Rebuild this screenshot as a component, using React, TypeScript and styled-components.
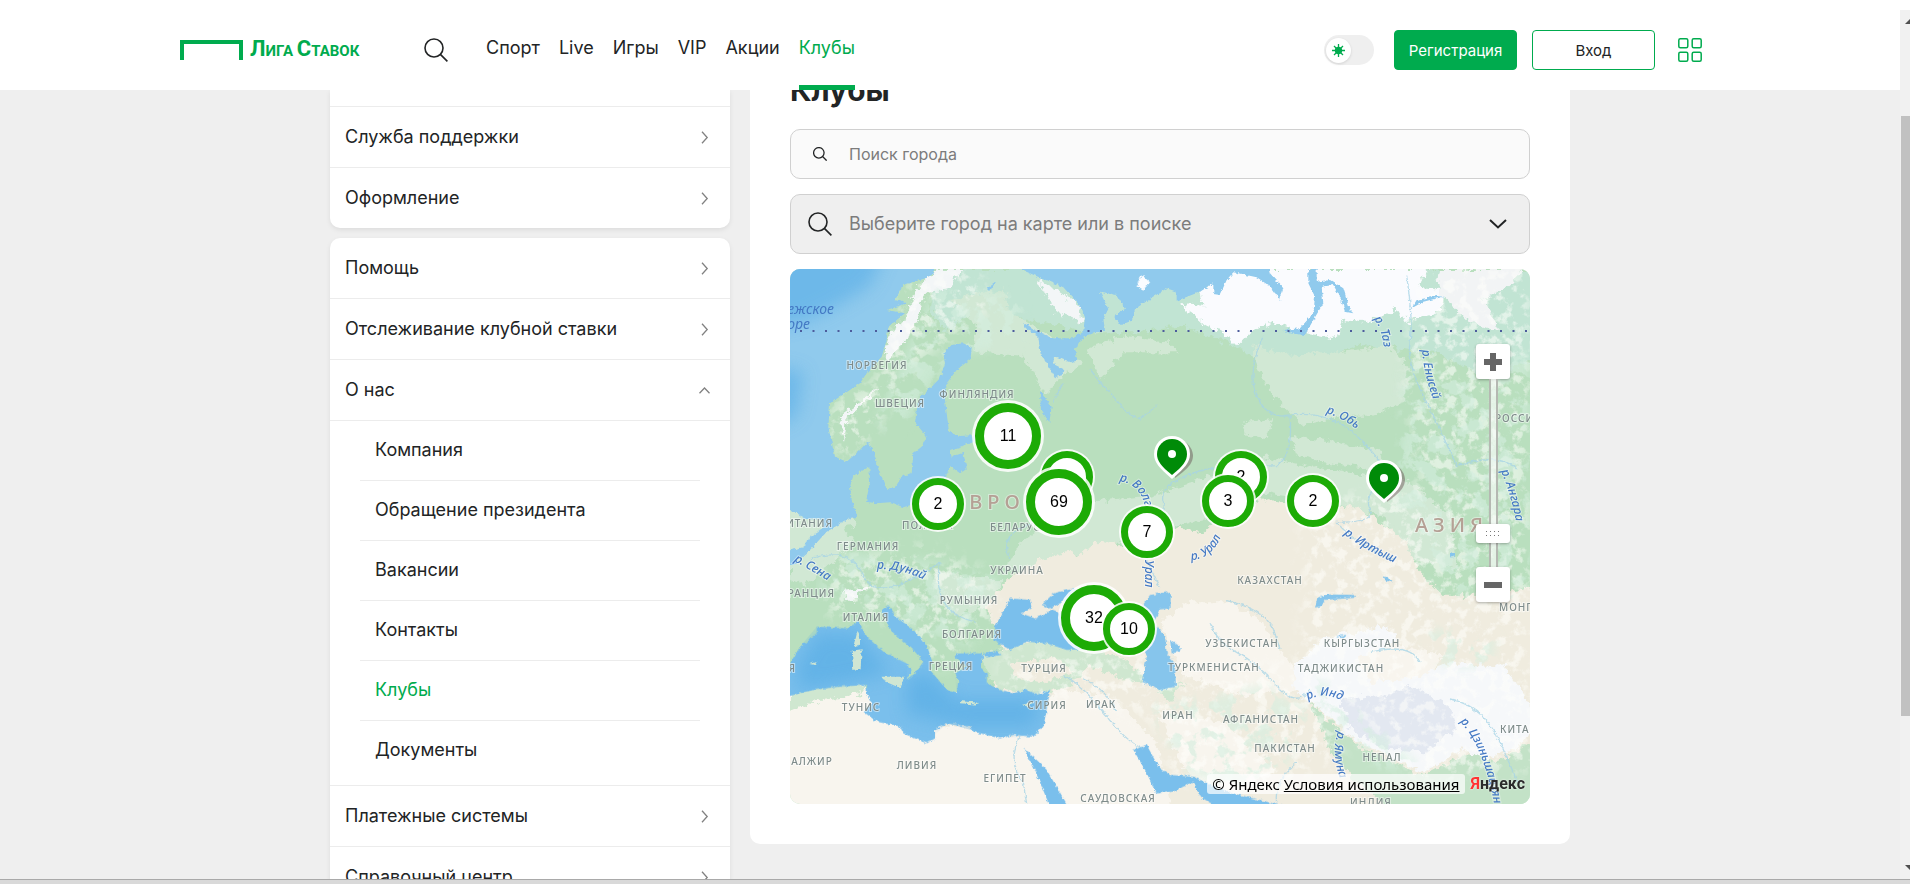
import React from "react";
import styled, { createGlobalStyle, css } from "styled-components";

const green = "#00ab4e";
const ink = "#222425";
const line = "#ececec";

const GlobalStyle = createGlobalStyle`
  *, *::before, *::after { box-sizing: border-box; }
  html, body { margin: 0; background: #fff; }
  body { font-family: Inter, "Open Sans", sans-serif; color: ${ink}; overflow: hidden; }
  button, input, select { font-family: inherit; color: inherit; margin: 0; }
  ul { list-style: none; margin: 0; padding: 0; }
  a { color: inherit; text-decoration: none; }
  svg { display: block; flex: none; }
`;

const Shell = styled.div`
  display: flex;
  flex-direction: column;
  height: 100vh;
`;

const Viewport = styled.div`
  display: flex;
  flex: 1;
  min-height: 0;
`;

const Page = styled.div`
  display: flex;
  flex-direction: column;
  flex: 1;
  min-width: 0;
  overflow: hidden;
  background: #efefef;
`;

const ScrollTrack = styled.div`
  display: flex;
  flex-direction: column;
  align-items: flex-end;
  width: 10px;
  margin-top: 10px;
  background: #f1f1f1;
  overflow: hidden;
`;

const ScrollThumb = styled.div`
  width: 9px;
  height: 69%;
  margin: 92px 0 auto;
  background: #c1c1c1;
`;

const ScrollArrow = styled.div<{ $down?: boolean }>`
  flex: none;
  width: 5px;
  height: 5px;
  margin: ${(p) => (p.$down ? "0 0 9px" : "9px 0 0")};
  background: #505050;
  clip-path: ${(p) => (p.$down ? "polygon(0 0, 100% 0, 100% 100%)" : "polygon(0 100%, 100% 0, 100% 100%)")};
`;

const BottomBar = styled.div`
  height: 5px;
  border-top: 1px solid #a9a9a9;
  background: #d9d9d9;
`;

const Header = styled.header`
  position: relative;
  z-index: 1;
  flex: none;
  height: 90px;
  background: #fff;
`;

const HeaderInner = styled.div`
  display: flex;
  align-items: stretch;
  max-width: 1540px;
  height: 100%;
  margin: 0 auto;
  padding-top: 10px;
`;

const Logo = styled.a`
  display: flex;
  align-items: center;
  gap: 7px;
  width: 181px;
  margin-right: 63px;
  color: ${green};
  font: 700 15px/24px Roboto, sans-serif;
  white-space: nowrap;
  text-transform: uppercase;
`;

const LogoInitial = styled.span`
  font-size: 22px;
`;

const IconButton = styled.button`
  display: flex;
  align-items: center;
  padding: 0;
  border: 0;
  background: none;
  cursor: pointer;
`;

const Nav = styled.nav`
  display: flex;
  gap: 19px;
  margin-left: 38px;
`;

const NavLink = styled.a<{ $active?: boolean }>`
  display: flex;
  padding-top: 26px;
  border-bottom: 5px solid ${(p) => (p.$active ? green : "transparent")};
  color: ${(p) => (p.$active ? green : ink)};
  font-size: 18px;
  line-height: 24px;
`;

const Actions = styled.div`
  display: flex;
  align-items: center;
  gap: 15px;
  margin: 0 10px 0 auto;
`;

const ThemeSwitch = styled.label`
  display: flex;
  align-items: center;
  width: 50px;
  height: 30px;
  margin-right: 5px;
  padding: 2px;
  border-radius: 15px;
  background: #efefef;
`;

const SwitchInput = styled.input`
  position: absolute;
  opacity: 0;
`;

const SwitchKnob = styled.span`
  display: flex;
  align-items: center;
  justify-content: center;
  width: 25px;
  height: 25px;
  border-radius: 50%;
  background: #fff;
  box-shadow: 0 1px 3px rgba(0, 0, 0, 0.12);
`;

const ActionButton = styled.button<{ $filled?: boolean }>`
  width: 123px;
  height: 40px;
  padding: 0;
  border: 1px solid ${green};
  border-radius: 4px;
  background: ${(p) => (p.$filled ? green : "#fff")};
  color: ${(p) => (p.$filled ? "#fff" : ink)};
  font-size: 15px;
  cursor: pointer;
`;

const Columns = styled.div`
  display: flex;
  align-items: flex-start;
  gap: 20px;
  width: 100%;
  max-width: 1240px;
  margin: 0 auto;
`;

const Sidebar = styled.aside`
  display: flex;
  flex-direction: column;
  gap: 10px;
  flex: 0 0 400px;
`;

const MenuCard = styled.ul<{ $continued?: boolean }>`
  border-radius: 10px;
  background: #fff;
  box-shadow: 0 2px 5px rgba(0, 0, 0, 0.08);
  ${(p) =>
    p.$continued &&
    css`
      padding-top: 16px;
      border-radius: 0 0 10px 10px;
    `}
`;

const MenuItem = styled.li<{ $top?: boolean; $last?: boolean }>`
  border-top: ${(p) => (p.$top ? `1px solid ${line}` : "0")};
  border-bottom: ${(p) => (p.$last ? "0" : `1px solid ${line}`)};
`;

const menuRow = css`
  display: flex;
  align-items: center;
  justify-content: space-between;
  width: 100%;
  height: 60px;
  padding: 0 19px 0 15px;
  border: 0;
  background: none;
  font-size: 18px;
  line-height: 24px;
  text-align: left;
`;
const MenuLink = styled.a`${menuRow}`;
const MenuToggle = styled.button`${menuRow}`;

const SubMenu = styled.ul`
  padding: 0 30px 4px;
  border-top: 1px solid ${line};
`;

const SubItem = styled.li`
  height: 60px;
  border-bottom: 1px solid ${line};
  &:last-child { border-bottom: 0; }
`;

const SubLink = styled.a<{ $active?: boolean }>`
  display: flex;
  align-items: center;
  height: 58px;
  padding-left: 15px;
  color: ${(p) => (p.$active ? green : ink)};
  font-size: 18px;
  line-height: 24px;
`;

const Content = styled.main`
  flex: 1;
  min-width: 0;
  margin-top: -60px;
  padding: 40px;
  border-radius: 10px;
  background: #fff;
`;

const Title = styled.h1`
  margin: 0 0 19px;
  font-size: 30px;
  font-weight: 700;
  line-height: 40px;
`;

const Field = styled.label<{ $tall?: boolean }>`
  display: flex;
  align-items: center;
  height: ${(p) => (p.$tall ? "60px" : "50px")};
  margin-bottom: 15px;
  border: 1px solid #d0d0d0;
  border-radius: 10px;
  background: ${(p) => (p.$tall ? "#efefef" : "#fafafa")};
`;

const FieldIcon = styled.span`
  display: flex;
  justify-content: center;
  width: 58px;
`;

const CityInput = styled.input`
  flex: 1;
  min-width: 0;
  padding: 0;
  border: 0;
  outline: 0;
  background: none;
  font-size: 16px;
  line-height: 24px;
  &::placeholder { color: #7c7c7c; opacity: 1; }
`;

const CitySelect = styled.select`
  flex: 1;
  min-width: 0;
  padding: 0;
  border: 0;
  outline: 0;
  appearance: none;
  background: none;
  color: #7c7c7c;
  font-size: 18px;
  line-height: 24px;
`;

const SelectChevron = styled.span`
  margin-right: 22px;
`;

const MapBox = styled.section`
  position: relative;
  height: 535px;
  border-radius: 10px;
  overflow: hidden;
`;

const Cluster = styled.button<{ $x: number; $y: number; $big?: boolean }>`
  position: absolute;
  left: ${(p) => p.$x}px;
  top: ${(p) => p.$y}px;
  width: ${(p) => (p.$big ? 66 : 52)}px;
  height: ${(p) => (p.$big ? 66 : 52)}px;
  padding: 0;
  transform: translate(-50%, -50%);
  border: ${(p) => (p.$big ? 9 : 7)}px solid #1dab06;
  border-radius: 50%;
  background: #fff;
  box-shadow: 0 0 0 ${(p) => (p.$big ? 3 : 2)}px rgba(255, 255, 255, 0.85);
  color: #000;
  font: 16px/20px "Liberation Sans", Arial, sans-serif;
`;

const Pin = styled.button<{ $x: number; $y: number }>`
  position: absolute;
  left: ${(p) => p.$x}px;
  top: ${(p) => p.$y}px;
  padding: 0;
  border: 0;
  background: none;
  transform: translate(-19px, -18px);
`;

const ZoomControl = styled.div`
  position: absolute;
  top: 75px;
  right: 20px;
  display: flex;
  flex-direction: column;
  align-items: center;
  width: 34px;
`;

const ZoomButton = styled.button`
  display: flex;
  align-items: center;
  justify-content: center;
  width: 34px;
  height: 35px;
  padding: 0;
  border: 0;
  border-radius: 3px;
  background: #fff;
  box-shadow: 0 1px 3px rgba(0, 0, 0, 0.3);
`;

const ZoomTrack = styled.div`
  display: flex;
  justify-content: center;
  align-items: flex-end;
  width: 9px;
  height: 188px;
  padding-bottom: 24px;
  border: solid #b5b8b2;
  border-width: 0 2px;
  background: rgba(255, 255, 255, 0.6);
`;

const ZoomHandle = styled.div`
  display: flex;
  flex: none;
  align-items: center;
  justify-content: center;
  width: 34px;
  height: 19px;
  border-radius: 3px;
  background: #fff;
  box-shadow: 0 1px 3px rgba(0, 0, 0, 0.3);
`;

const Attribution = styled.div`
  position: absolute;
  right: 5px;
  bottom: 10px;
  display: flex;
  align-items: center;
  gap: 6px;
  color: #000;
  font: 15px/20px "Noto Sans", "Open Sans", sans-serif;
  white-space: nowrap;
`;

const Terms = styled.span`
  padding: 0 5px;
  border-radius: 3px;
  background: rgba(255, 255, 255, 0.7);
  a { text-decoration: underline; }
`;

const YandexLogo = styled.a`
  color: #2b2b2b;
  font: 700 16px/20px Roboto, sans-serif;
  text-shadow: 0 0 2px #fff;
  span { color: #f33; }
`;

const Chevron = ({ up }: { up?: boolean }) => (
  <svg width="13" height="13" viewBox="0 0 13 13" fill="none" stroke="#818181" strokeWidth="1.3" aria-hidden>
    <path d={up ? "M1.5 9.2 6.5 4l5 5.2" : "M4 .8 9.2 6.5 4 12.2"} />
  </svg>
);

const SearchIcon = ({ size, weight = 1.6 }: { size: number; weight?: number }) => (
  <svg width={size} height={size} viewBox="0 0 24 24" fill="none" stroke={ink} strokeWidth={weight} aria-hidden>
    <circle cx="10" cy="10" r="9" />
    <path d="m16.4 16.4 7 7" />
  </svg>
);

type Label = [string, number, number, ("start" | "end")?];
const countries: Label[] = [
  ["НОРВЕГИЯ", 87, 100], ["ШВЕЦИЯ", 110, 138], ["ФИНЛЯНДИЯ", 187, 129],
  ["БРИТАНИЯ", 43, 258, "end"], ["ПОЛЬША", 112, 260, "start"], ["БЕЛАРУСЬ", 200, 262, "start"],
  ["РОССИЯ", 705, 153, "start"], ["ГЕРМАНИЯ", 78, 281], ["УКРАИНА", 227, 305],
  ["ФРАНЦИЯ", 45, 328, "end"], ["ИТАЛИЯ", 76, 352], ["РУМЫНИЯ", 179, 335],
  ["БОЛГАРИЯ", 182, 369], ["ГРЕЦИЯ", 161, 401], ["ТУРЦИЯ", 254, 403], ["ИСПАНИЯ", 6, 403, "end"],
  ["ТУНИС", 71, 442], ["СИРИЯ", 257, 440], ["ИРАК", 311, 439], ["АЛЖИР", 22, 496],
  ["ЛИВИЯ", 127, 500], ["ЕГИПЕТ", 215, 513], ["САУДОВСКАЯ", 328, 533],
  ["КАЗАХСТАН", 480, 315], ["УЗБЕКИСТАН", 452, 378], ["ТУРКМЕНИСТАН", 424, 402],
  ["КЫРГЫЗСТАН", 572, 378], ["ТАДЖИКИСТАН", 551, 403], ["ИРАН", 388, 450],
  ["АФГАНИСТАН", 471, 454], ["ПАКИСТАН", 495, 483], ["НЕПАЛ", 592, 492],
  ["КИТАЙ", 710, 464, "start"], ["МОНГОЛИЯ", 709, 342, "start"], ["ИНДИЯ", 581, 537],
];

const rivers: [string, string][] = [
  ["р. Сена", "M4 292 Q22 302 42 314"],
  ["р. Дунай", "M87 300 Q112 299 138 313"],
  ["р. Волга", "M329 212 Q355 216 356 248"],
  ["р. Урал", "M355 278 V335"],
  ["р. Урал", "M401 291 Q424 290 433 262"],
  ["р. Таз", "M584 50 Q593 62 594 82"],
  ["р. Енисей", "M632 81 Q634 108 646 138"],
  ["р. Обь", "M536 144 Q556 150 572 165"],
  ["р. Ангара", "M711 202 Q722 228 727 258"],
  ["р. Иртыш", "M554 265 Q575 282 612 297"],
  ["р. Инд", "M518 431 Q535 421 556 434"],
  ["р. Ямуна", "M548 462 Q540 485 552 515"],
  ["р. Цзиньшацзян", "M670 453 Q694 476 706 545"],
];

const Terrain = () => (
  <svg width="100%" height="100%" viewBox="0 0 740 535" preserveAspectRatio="xMidYMid slice" role="img" aria-label="Карта клубов">
    <defs>
      <filter id="coast" x="-5%" y="-5%" width="110%" height="110%">
        <feTurbulence type="fractalNoise" baseFrequency=".09" numOctaves="3" seed="4" />
        <feDisplacementMap in="SourceGraphic" scale="12" xChannelSelector="R" yChannelSelector="G" />
      </filter>
      <filter id="ragged" x="-10%" y="-10%" width="120%" height="120%">
        <feTurbulence type="fractalNoise" baseFrequency=".05" numOctaves="4" seed="9" />
        <feDisplacementMap in="SourceGraphic" scale="34" xChannelSelector="R" yChannelSelector="G" />
      </filter>
      <filter id="relief" x="0" y="0" width="100%" height="100%">
        <feGaussianBlur in="SourceGraphic" stdDeviation="24" result="area" />
        <feTurbulence type="fractalNoise" baseFrequency=".03" numOctaves="5" seed="12" />
        <feColorMatrix type="matrix" values="0 0 0 0 1  0 0 0 0 1  0 0 0 0 .97  6 0 0 0 -3" />
        <feComposite in2="area" operator="in" />
      </filter>
      <filter id="woods" x="0" y="0" width="100%" height="100%">
        <feGaussianBlur in="SourceGraphic" stdDeviation="16" result="area" />
        <feTurbulence type="fractalNoise" baseFrequency=".018" numOctaves="5" seed="21" />
        <feColorMatrix type="matrix" values="0 0 0 0 .66  0 0 0 0 .86  0 0 0 0 .74  0 12 0 0 -6.2" />
        <feComposite in2="area" operator="in" />
      </filter>
      <filter id="soft" x="-50%" y="-50%" width="200%" height="200%"><feGaussianBlur stdDeviation="26" /></filter>
      <clipPath id="medClip">
        <path d="M30 500 30 400 60 350 110 290 200 295 235 275 260 320 310 365 380 410 380 450 405 430 430 395 400 360 330 300 305 240 325 225 345 258 440 345 450 420 500 480 530 490 525 430 545 405 525 370 600 370 600 410 620 460 700 490 810 480 790 590 760 620 660 625 500 580 440 640 360 590 250 545 260 465 100 480Z" />
      </clipPath>
    </defs>
    <rect width="740" height="535" fill="#b9dfbe" />
    <g transform="scale(.333333)">
      {/* vegetation belts and steppe */}
      <g filter="url(#ragged)">
        <path fill="#c1e4d3" d="M440 0H2260V260L2100 330 1940 250 1840 240 1700 230 1560 280 1450 290 1330 230 1180 170 1050 190 900 190 700 150 560 110 470 190 420 120Z" />
        <path fill="#d1e8d4" d="M480 90 640 60 660 130 780 200 880 280 800 330 770 380 700 260 550 250 560 170ZM890 240 1000 200 1130 220 1170 250 1000 250 930 330ZM1390 230 1500 260 1640 250 1800 230 1860 300 1840 400 1740 440 1650 440 1540 470 1450 380 1400 300ZM1360 460 1450 450 1430 510 1370 500ZM1500 500 1760 540 1800 610 1600 580 1520 560ZM880 700 1080 680 1180 650 1400 560 1600 600 1860 640 1980 740 2000 900 1840 860 1780 740 1560 690 1400 670 1280 740 1040 800 850 870 640 910 690 820 780 760ZM0 780 150 760 190 820 120 890 40 950 0 920ZM430 900 560 930 640 930 600 1010 500 1040 440 1000ZM120 590 180 700 200 770 110 780Z" />
        <path fill="#f0ecdf" d="M590 1010 680 905 760 870 850 845 860 870 930 810 1000 835 1060 790 1140 775 1240 790 1280 750 1340 725 1430 690 1520 712 1700 715 1790 770 1850 820 1880 900 1960 980 2100 980 2260 950V1660H-40V1240L600 1270 640 1150Z" />
        <path fill="#f8f5ee" d="M-20 1280 220 1240 400 1360 700 1400 800 1260 960 1280 1100 1420 1150 1640H-20ZM1110 1060 1190 1000 1320 1000 1420 1060 1460 1130 1560 1260 1360 1280 1180 1220ZM1620 1180 1780 1120 1960 1160 1900 1240 1760 1290 1640 1250ZM1100 1320 1300 1360 1460 1500 1300 1600 1180 1500Z" />
        <path fill="#cfe7d0" d="M570 1160 740 1110 860 1130 980 1160 1080 1230 1030 1240 900 1190 840 1250 740 1280 620 1260ZM0 1260 120 1250 230 1245 220 1275 90 1290 0 1330ZM1100 1260 1180 1240 1140 1300Z" />
        <path fill="#f0ecdf" d="M660 1180 800 1170 850 1210 760 1240 680 1230Z" />
        <path fill="#f6f8fa" d="M1510 1190 1600 1110 1780 1070 1830 1110 1700 1170 1740 1240 1860 1230 1980 1180 2140 1190 2200 1270 2240 1360 2180 1440 2080 1470 2020 1440 1900 1510 1700 1420 1590 1320 1510 1260Z" />
        <path fill="#e3e8f1" d="M1650 1290 1780 1280 1860 1250 1980 1310 2000 1380 1900 1450 1800 1440 1680 1380Z" />
        <path fill="#c3e2c7" d="M1560 1300 1700 1430 1900 1520 2040 1450 2120 1480 2260 1400V1640H1820L1700 1540 1620 1440Z" />
        <path fill="#fafbfe" d="M1170 105 1240 110 1230 60 1290 20 1320 0H1920L1880 50 1970 60 1950 130 1850 160 1820 120 1740 160 1660 150 1640 210 1540 190 1440 160 1380 190 1340 230 1300 190 1250 170Z" />
        <path fill="#f2f4f5" d="M1950 0H2200L2160 50 2080 90 2130 190 2040 160 1990 110 1940 70Z" />
        <path fill="#f3f6f7" d="M440 0 520 0 470 60 400 80 380 160 330 240 285 280 300 190 350 150 370 70ZM270 355 225 400 175 440 165 520 150 440ZM740 30 800 60 870 110 880 160 800 130ZM155 970 215 960 240 955 190 995Z" />
      </g>
      <path fill="#000" opacity=".55" filter="url(#relief)" d="M360 40 560 0 600 120 430 240 340 330 260 470 180 570 120 520 130 400 260 340ZM100 880 400 830 600 920 620 1030 450 1200 340 1060 120 1040ZM1900 0H2220V740L2060 800 1900 700 1840 300ZM1540 700 2220 620V1200L1540 1160ZM1080 1240 1540 1180 1660 1460 1400 1570 1150 1530ZM640 1150 1100 1160 1200 1400 950 1300 640 1260ZM1500 1140H2220V1500L1900 1530Z" />
      <path fill="#000" opacity=".6" filter="url(#woods)" d="M1840 300 2220 240V760L2120 960 1900 880 1820 700ZM160 850 420 880 630 930 540 1130 380 1080 300 1010 80 960ZM1080 1310 1240 1290 1420 1250 1560 1330 1480 1500 1330 1560 1180 1500ZM1540 1240H1600L1900 1500 1760 1500ZM1880 820 2220 860V990L1960 980ZM1900 1080 2120 1100 2100 1190 1960 1190ZM440 50 700 90 700 220 480 260 320 500 260 460Z" />
      {/* open water */}
      <g filter="url(#coast)" fill="#90caed">
        <g transform="translate(-30 -27)">
          <path d="M0 0H480L455 45 430 57 370 75 345 120 380 130 320 150 375 160 325 200 320 240 305 290 260 340 240 370 150 430 145 500 165 590 200 605 240 570 262 545 280 570 295 627 320 690 345 683 365 650 395 640 400 580 425 560 440 530 405 487 415 420 450 385 480 355 495 310 490 280 515 255 550 250 575 262 572 297 530 330 500 370 495 420 500 460 507 515 540 528 590 525 635 530 580 547 540 560 510 570 515 590 550 578 560 627 540 640 510 618 490 667 460 717 420 727 370 742 330 727 290 730 258 725 270 667 268 620 220 647 210 680 215 720 232 770 210 774 140 815 90 870 40 915H0Z" />
          <path d="M720 27 790 57 850 82 900 137 915 172 910 212 880 235 820 235 760 207 730 185 735 202 775 232 782 282 810 327 825 352 848 345 850 327 820 312 822 289 870 307 892 302 885 267 900 242 925 225 975 210 970 177 985 147 960 95 1010 105 1035 147 1000 167 1022 195 1055 182 1065 147 1110 117 1160 85 1190 95 1190 122 1260 95 1300 70 1300 102 1320 105 1340 60 1360 37 1430 52 1470 77 1500 120 1510 85 1470 40 1460 0H720Z" />
          <path d="M780 390 815 440 808 486 783 450ZM620 83 650 62 630 92ZM1895 145 1910 120 1970 108 1990 110 1930 125Z" />
          <path d="M1585 27H1610V65L1650 60 1690 85 1710 150 1720 160 1695 155 1680 110 1660 75 1625 80 1630 130 1600 180 1575 225 1530 220 1510 210 1560 205 1600 160 1605 110 1585 70Z" />
        </g>
      </g>
      <g opacity=".85" filter="url(#soft)" fill="#68b5e8">
        <path d="M-60 -60H290L240 50 140 110 60 150 -60 180ZM-60 290 40 310 20 440 -60 480Z" />
      </g>
      <g filter="url(#coast)">
        <path fill="#d1e8d4" d="M-10 725 25 730 40 750 95 752 100 775 60 805 40 835-10 845Z" />
        <path fill="#fbfcff" d="M1040 50 1055 18 1080 40 1060 62Z" />
        <g transform="translate(-30 783)">
          <path fill="#7abfec" d="M0 505 30 400 60 350 110 310 110 290 200 295 235 275 260 320 310 365 380 400 395 420 380 450 405 430 430 395 400 360 330 300 305 240 325 225 345 258 400 300 440 345 455 390 450 420 500 480 530 490 535 450 525 430 560 410 530 390 525 370 600 370 610 380 600 410 620 430 620 460 660 480 700 490 740 480 770 495 810 480 800 540 790 590 760 620 700 615 660 625 580 605 570 590 500 580 465 600 465 625 440 640 370 610 360 590 290 575 250 545 275 520 260 490 260 465 170 470 100 480Z" />
          <path fill="#7abfec" d="M645 290 690 205 750 210 755 235 725 250 765 265 820 240 845 250 900 300 960 330 975 355 860 360 800 340 740 335 690 360 640 330ZM785 225 820 190 880 175 900 200 850 215 810 235ZM610 372 650 362 665 375 620 382ZM730 655 770 690 800 720 865 830H810L760 710Z" />
          <path fill="#7abfec" d="M1060 660 1100 645 1135 710 1170 735 1240 740 1290 765 1360 790 1520 830H1310L1260 800 1240 755 1180 785 1130 790 1095 720Z" />
          <path fill="#86c5ec" d="M1085 230 1110 195 1172 185 1172 235 1140 238 1120 280 1155 315 1160 370 1185 400 1188 470 1140 480 1085 455 1100 380 1080 310Z" />
          <path fill="#86c5ec" d="M1170 330 1202 350 1200 365 1175 370ZM1605 235 1612 203 1640 193 1725 195 1722 204 1635 210 1622 233ZM1810 138 1840 152 1820 157ZM1668 318 1702 315 1690 325ZM2010 68 2025 65 2025 80 2010 82Z" />
        </g>
      </g>
      <g transform="translate(-30 783)" clipPath="url(#medClip)">
        <path opacity=".7" filter="url(#soft)" fill="#5aaee5" d="M50 410 110 310 230 310 330 430 180 460 60 480ZM380 440 450 430 530 510 780 510 760 590 560 590 380 550Z" />
      </g>
      <g transform="translate(-30 783)" filter="url(#coast)">
        <path fill="#cfe6d3" d="M232 305 240 330 235 350 222 345ZM215 362 245 358 242 415 220 420ZM305 440 372 440 362 475 305 450ZM540 513 595 518 595 524 540 520ZM725 525 760 515 745 532ZM88 402 110 395 105 405Z" />
      </g>
      {/* rivers */}
      <g fill="none" stroke="#a7d4e6" strokeWidth="4" opacity=".75" filter="url(#coast)">
        <path d="M1420 200Q1370 310 1400 380T1500 440Q1510 560 1460 590L1250 600Q1100 640 1120 700T1010 780Q1030 830 1060 850L1110 960" />
        <path d="M1480 440Q1620 420 1700 500T1790 610Q1720 680 1740 720T1640 760Q1700 830 1810 870" />
        <path d="M1850 20Q1870 160 1860 220T1900 380 2000 590Q2130 550 2180 600" />
        <path d="M900 300 930 340 960 370 1010 430 1050 450 1100 410M820 340 790 400M1260 1060Q1280 1120 1340 1150T1460 1250 1560 1260" />
        <path d="M1310 995Q1420 1020 1450 1080L1470 1140M820 1220Q870 1240 940 1330T1060 1440M880 1230Q950 1260 980 1330M60 870Q180 830 220 920T450 880Q420 1030 560 1060M930 1620" />
        <path d="M1520 1480Q1450 1540 1460 1600M690 1400Q650 1480 700 1540L710 1605M1740 1150Q1860 1120 1890 1180M1980 1290Q2080 1310 2130 1420T2180 1540M660 870Q620 790 740 760T860 680" />
      </g>
    </g>
    <path d="M10 62H740" stroke="#4d5c9c" strokeWidth="2" strokeDasharray="2 10.5" />
    <g fill="#7f8c8b" stroke="#fff" strokeOpacity=".5" strokeWidth="2" paintOrder="stroke" fontFamily='"Noto Sans", "Open Sans", sans-serif' fontWeight="500" fontSize="10" letterSpacing="1">
      {countries.map(([name, x, y, anchor = "middle"]) => (
        <text key={name} x={x} y={y} textAnchor={anchor}>{name}</text>
      ))}
    </g>
    <g fill="#b5a095" stroke="#fff" strokeOpacity=".4" strokeWidth="2" paintOrder="stroke" fontFamily='"Noto Sans", "Open Sans", sans-serif' fontWeight="500" fontSize="20" letterSpacing="5">
      <text x="163" y="240">ЕВРОПА</text>
      <text x="625" y="263">АЗИЯ</text>
    </g>
    <g fill="#4479c4" fontFamily='"Noto Sans", "Open Sans", sans-serif' fontStyle="italic" fontSize="14">
      <text x="44" y="45" textAnchor="end">Норвежское</text>
      <text x="20" y="60" textAnchor="end">море</text>
    </g>
    <g fill="#4479c4" stroke="#fff" strokeOpacity=".4" strokeWidth="2" paintOrder="stroke" fontFamily='"Noto Sans", "Open Sans", sans-serif' fontStyle="italic" fontWeight="500" fontSize="12">
      {rivers.map(([name, d], i) => (
        <React.Fragment key={i}>
          <path id={`river-${i}`} d={d} fill="none" stroke="none" />
          <text><textPath href={`#river-${i}`}>{name}</textPath></text>
        </React.Fragment>
      ))}
    </g>
  </svg>
);

const clusters: { n: string; x: number; y: number; big?: boolean }[] = [
  { n: "11", x: 218, y: 167, big: true },
  { n: "", x: 277, y: 208 },
  { n: "69", x: 269, y: 233, big: true },
  { n: "2", x: 148, y: 235 },
  { n: "7", x: 357, y: 263 },
  { n: "2", x: 451, y: 208 },
  { n: "3", x: 438, y: 232 },
  { n: "2", x: 523, y: 232 },
  { n: "32", x: 304, y: 349, big: true },
  { n: "10", x: 339, y: 360 },
];

const pins = [
  { x: 382, y: 184 },
  { x: 594, y: 208 },
];

const navItems = ["Спорт", "Live", "Игры", "VIP", "Акции", "Клубы"];
const aboutItems = ["Компания", "Обращение президента", "Вакансии", "Контакты", "Клубы", "Документы"];

const Row = ({ text, top, last }: { text: string; top?: boolean; last?: boolean }) => (
  <MenuItem $top={top} $last={last}>
    <MenuLink href="#">{text}<Chevron /></MenuLink>
  </MenuItem>
);

export default function App() {
  return (
    <Shell>
      <GlobalStyle />
      <Viewport>
        <Page>
          <Header>
            <HeaderInner>
              <Logo href="#">
                <svg width="63" height="20" viewBox="0 0 63 20" fill={green} aria-hidden>
                  <path d="M0 0H63V20H59V4H4V20H0Z" />
                </svg>
                <span><LogoInitial>Л</LogoInitial>ига <LogoInitial>С</LogoInitial>тавок</span>
              </Logo>
              <IconButton aria-label="Поиск"><SearchIcon size={24} /></IconButton>
              <Nav>
                {navItems.map((n) => (
                  <NavLink key={n} href="#" $active={n === "Клубы"}>{n}</NavLink>
                ))}
              </Nav>
              <Actions>
                <ThemeSwitch>
                  <SwitchInput type="checkbox" role="switch" aria-label="Тёмная тема" />
                  <SwitchKnob>
                    <svg width="13" height="13" viewBox="0 0 13 13" fill={green} stroke={green} strokeWidth="1.3" aria-hidden>
                      <circle cx="6.5" cy="6.5" r="3" />
                      <path d="M6.5 0v13M0 6.5h13M2 2l9 9M11 2l-9 9" />
                    </svg>
                  </SwitchKnob>
                </ThemeSwitch>
                <ActionButton $filled>Регистрация</ActionButton>
                <ActionButton>Вход</ActionButton>
                <IconButton aria-label="Меню">
                  <svg width="40" height="24" viewBox="0 0 40 24" fill="none" stroke={green} strokeWidth="1.5" aria-hidden>
                    <rect x="8.8" y=".8" width="9" height="9" rx="1.5" />
                    <rect x="22.2" y=".8" width="9" height="9" rx="1.5" />
                    <rect x="8.8" y="14.2" width="9" height="9" rx="1.5" />
                    <rect x="22.2" y="14.2" width="9" height="9" rx="1.5" />
                  </svg>
                </IconButton>
              </Actions>
            </HeaderInner>
          </Header>
          <Columns>
            <Sidebar>
              <MenuCard $continued>
                <Row text="Служба поддержки" top />
                <Row text="Оформление" last />
              </MenuCard>
              <MenuCard>
                <Row text="Помощь" />
                <Row text="Отслеживание клубной ставки" />
                <MenuItem>
                  <MenuToggle aria-expanded="true">О нас<Chevron up /></MenuToggle>
                  <SubMenu>
                    {aboutItems.map((n) => (
                      <SubItem key={n}><SubLink href="#" $active={n === "Клубы"}>{n}</SubLink></SubItem>
                    ))}
                  </SubMenu>
                </MenuItem>
                <Row text="Платежные системы" />
                <Row text="Справочный центр" />
              </MenuCard>
            </Sidebar>
            <Content>
              <Title>Клубы</Title>
              <Field>
                <FieldIcon><SearchIcon size={14} weight={2.2} /></FieldIcon>
                <CityInput type="text" placeholder="Поиск города" aria-label="Поиск города" />
              </Field>
              <Field $tall>
                <FieldIcon><SearchIcon size={24} /></FieldIcon>
                <CitySelect aria-label="Город">
                  <option>Выберите город на карте или в поиске</option>
                </CitySelect>
                <SelectChevron>
                  <svg width="18" height="10" viewBox="0 0 18 10" fill="none" stroke={ink} strokeWidth="2" aria-hidden>
                    <path d="m1 1 8 7.5L17 1" />
                  </svg>
                </SelectChevron>
              </Field>
              <MapBox>
                <Terrain />
                {clusters.map((c, i) => (
                  <Cluster key={i} $x={c.x} $y={c.y} $big={c.big}>{c.n}</Cluster>
                ))}
                {pins.map((p) => (
                  <Pin key={p.x} $x={p.x} $y={p.y} aria-label="Клуб">
                    <svg width="44" height="46" viewBox="0 0 44 46" aria-hidden>
                      <path d="M22 43C38 32 40 26 40 20A18 18 0 0 0 22 4Z" fill="#54303a" opacity=".38" />
                      <path d="M19 44C6 33 1 27 1 19a18 18 0 1 1 36 0c0 8-5 14-18 25Z" fill="#fff" />
                      <path d="M19 40C8 31 4 26 4 19a15 15 0 1 1 30 0c0 7-4 12-15 21Z" fill="#008b08" />
                      <circle cx="19" cy="19" r="4" fill="#fff" />
                    </svg>
                  </Pin>
                ))}
                <ZoomControl>
                  <ZoomButton aria-label="Приблизить">
                    <svg width="18" height="18" viewBox="0 0 18 18" fill="#666" aria-hidden><path d="M6 0h6v6h6v6h-6v6H6v-6H0V6h6Z" /></svg>
                  </ZoomButton>
                  <ZoomTrack>
                    <ZoomHandle>
                      <svg width="14" height="6" viewBox="0 0 14 6" fill="#777" aria-hidden>
                        <path d="M0 0h1v1H0zM4 0h1v1H4zM8 0h1v1H8zM12 0h1v1h-1zM0 4h1v1H0zM4 4h1v1H4zM8 4h1v1H8zM12 4h1v1h-1z" />
                      </svg>
                    </ZoomHandle>
                  </ZoomTrack>
                  <ZoomButton aria-label="Отдалить">
                    <svg width="18" height="6" viewBox="0 0 18 6" fill="#666" aria-hidden><path d="M0 0h18v6H0Z" /></svg>
                  </ZoomButton>
                </ZoomControl>
                <Attribution>
                  <Terms>© Яндекс <a href="#">Условия использования</a></Terms>
                  <YandexLogo href="#"><span>Я</span>ндекс</YandexLogo>
                </Attribution>
              </MapBox>
            </Content>
          </Columns>
        </Page>
        <ScrollTrack aria-hidden>
          <ScrollArrow />
          <ScrollThumb />
          <ScrollArrow $down />
        </ScrollTrack>
      </Viewport>
      <BottomBar />
    </Shell>
  );
}
